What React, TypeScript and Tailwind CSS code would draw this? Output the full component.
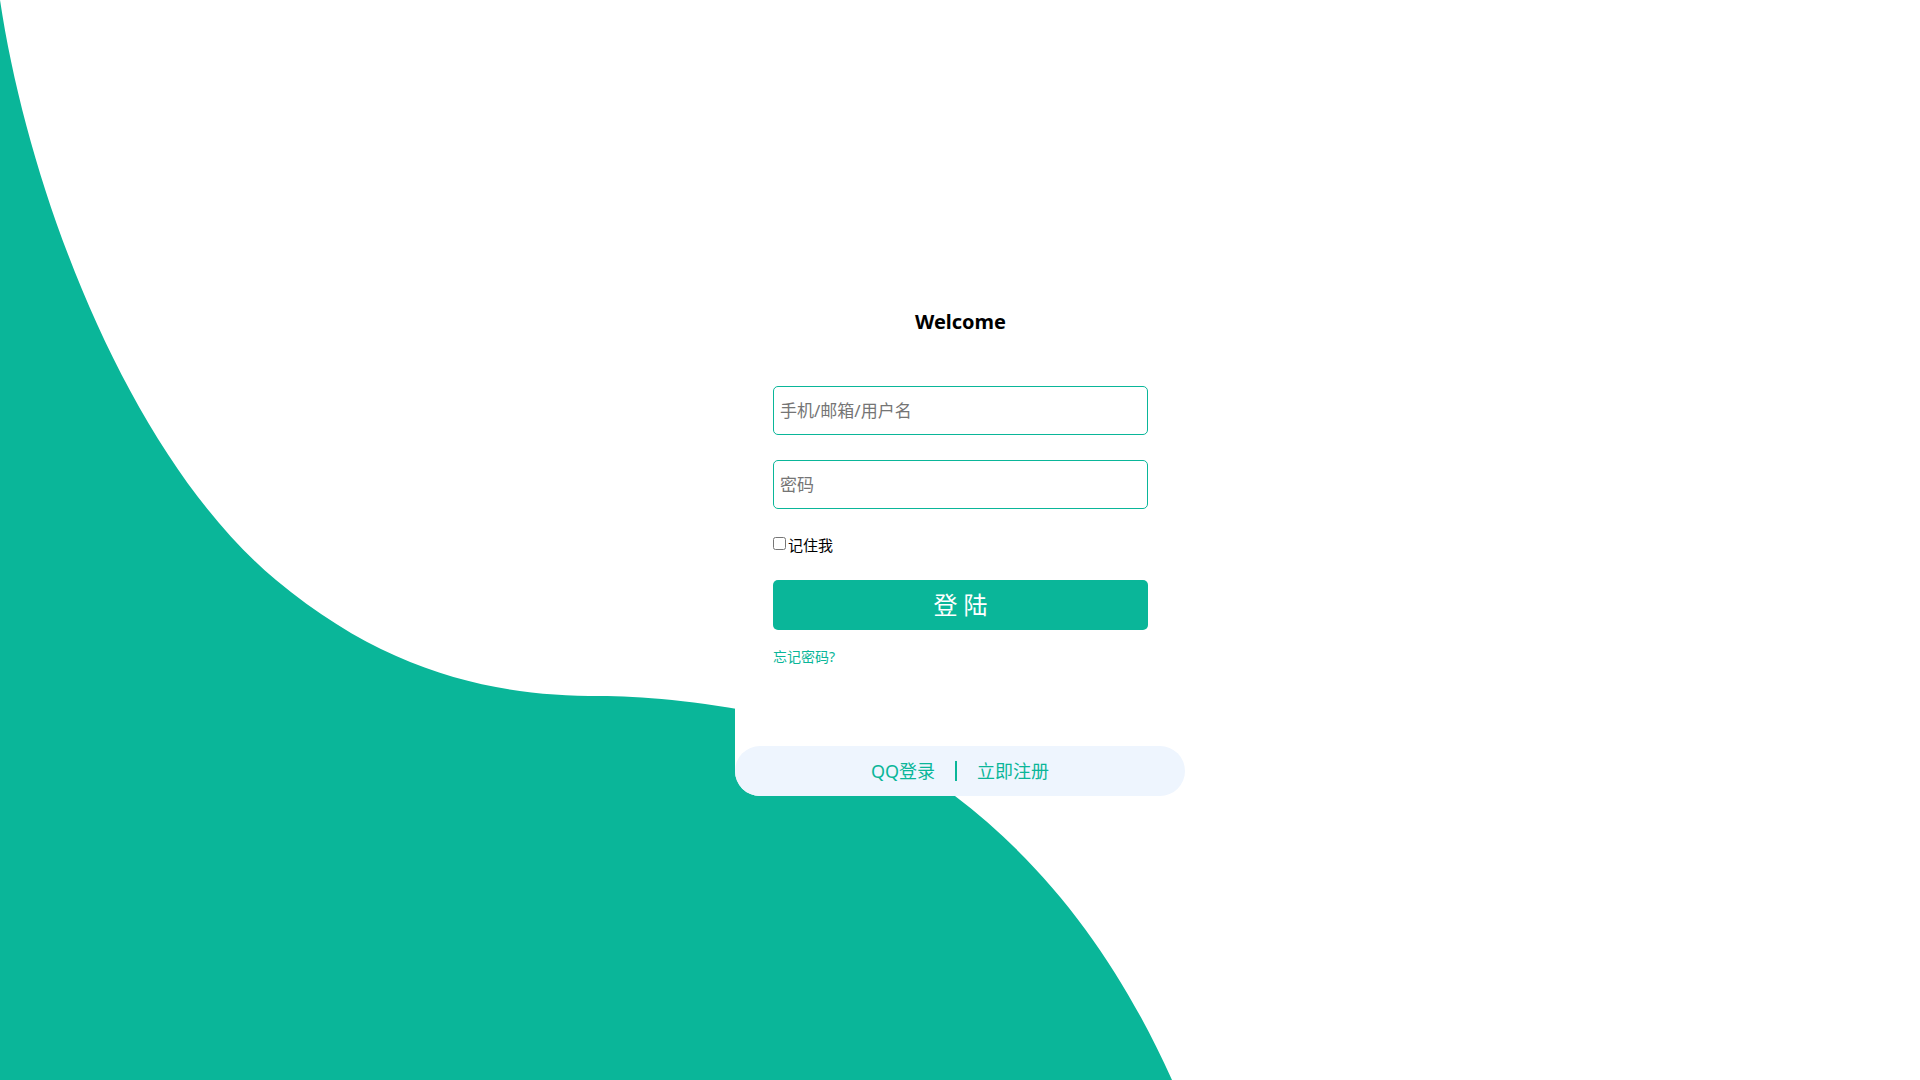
import { FC } from "react";

const font = { fontFamily: '"Noto Sans", "Noto Sans CJK SC", sans-serif' };

const Wave: FC = () => (
  <svg className="absolute inset-0 h-full w-full" viewBox="0 0 1920 1080" preserveAspectRatio="none">
    <path
      fill="#0ab699"
      d="M0,0 C30,200 132,460 276,580 C391,676 500,696 600,696 C680,696 871,718 955,796 C1055,872 1123,971 1172,1080 L0,1080 Z"
    />
  </svg>
);

const LoginCard: FC = () => (
  <div className="relative flex h-[512px] w-[450px] flex-col rounded-b-[25px] bg-white">
    <div className="flex flex-col pl-[38px] pr-[37px] pt-[24px]">
      <h1 className="text-center text-[20px] font-bold leading-[28px] text-black">Welcome</h1>
      <input
        type="text"
        autoFocus
        placeholder="手机/邮箱/用户名"
        className="mt-[50px] h-[49px] w-full rounded-[5px] border border-[#0ab699] px-[6px] text-[17px] outline-none placeholder:text-[#757575]"
        style={font}
      />
      <input
        type="password"
        placeholder="密码"
        className="mt-[25px] h-[49px] w-full rounded-[5px] border border-[#0ab699] px-[6px] text-[17px] outline-none placeholder:text-[#757575]"
        style={font}
      />
      <label className="mt-[24px] flex h-[20px] items-center text-[15px] leading-[20px] text-black">
        <input type="checkbox" className="h-[13px] w-[13px]" />
        <span className="ml-[2px] pt-[3px]">记住我</span>
      </label>
      <button className="mt-[27px] h-[50px] w-full rounded-[5px] bg-[#0ab699] text-[24px] text-white">
        登 陆
      </button>
      <a className="mt-[18px] text-[14px] leading-[18px] text-[#0ab699]">忘记密码?</a>
    </div>
    <div className="mt-auto flex h-[50px] items-center justify-center rounded-[25px] bg-[#eef5fe] text-[18px] text-[#0ab699]">
      <span>QQ登录</span>
      <span className="mx-[20px] h-[20px] w-[2px] bg-[#0ab699]" />
      <span>立即注册</span>
    </div>
  </div>
);

export default function App() {
  return (
    <div className="relative flex h-[1080px] w-full items-center justify-center overflow-hidden bg-white" style={font}>
      <Wave />
      <LoginCard />
    </div>
  );
}
